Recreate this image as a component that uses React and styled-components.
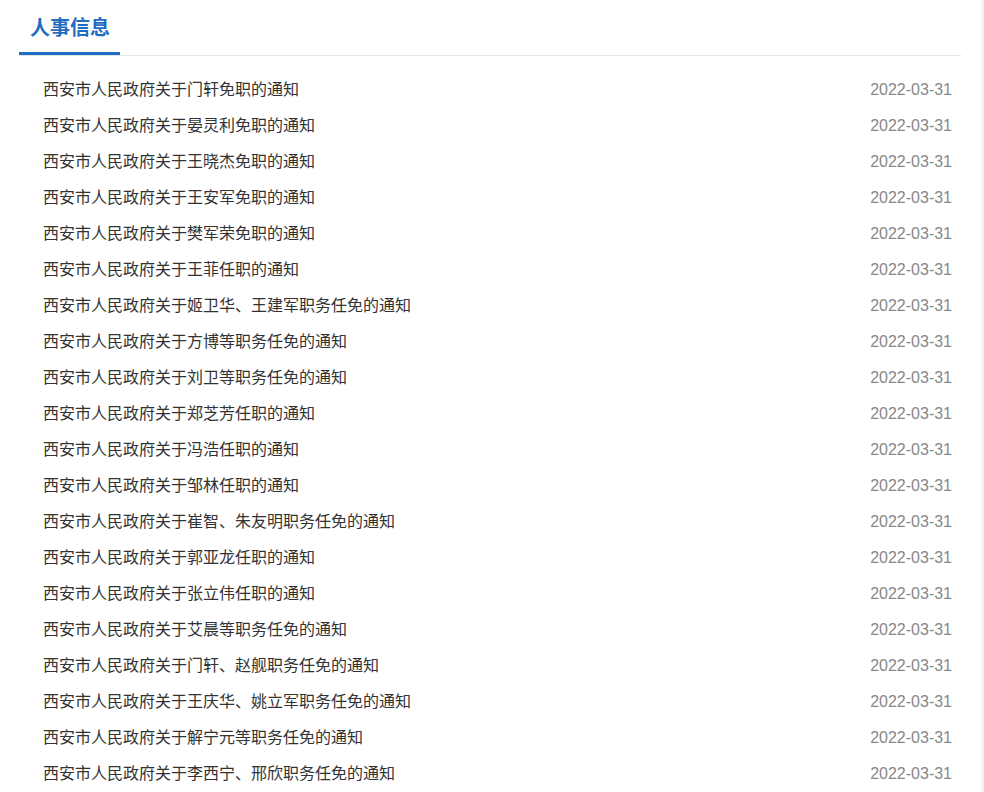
import React from 'react'
import styled, { createGlobalStyle } from 'styled-components'

const GlobalStyle = createGlobalStyle`
  html, body {
    margin: 0;
    padding: 0;
    background: #fff;
  }
  body {
    font-family: "Liberation Sans", "Noto Sans CJK SC", sans-serif;
  }
`

const Page = styled.div`
  display: flex;
  min-height: 100vh;
`

const Main = styled.div`
  flex: 1;
  padding: 0 20px 0 19px;
`

const Strip = styled.div`
  width: 3px;
  background: #edf4fc;
`

const Header = styled.div`
  display: flex;
  border-bottom: 1px solid #e3e3e3;
`

const Tab = styled.div`
  padding: 4px 10px 0 11px;
  line-height: 48px;
  height: 48px;
  font-size: 20px;
  font-weight: bold;
  color: #1f6cc2;
  border-bottom: 3px solid #1f6fc4;
`

const List = styled.ul`
  list-style: none;
  margin: 0;
  padding: 14px 9px 0 24px;
`

const Row = styled.li`
  display: flex;
  justify-content: space-between;
  align-items: center;
  height: 36px;
  font-size: 16px;
`

const Title = styled.a`
  color: #333;
  text-decoration: none;
`

const Date = styled.span`
  padding-top: 4px;
  color: #888;
`

const names = [
  '门轩免职',
  '晏灵利免职',
  '王晓杰免职',
  '王安军免职',
  '樊军荣免职',
  '王菲任职',
  '姬卫华、王建军职务任免',
  '方博等职务任免',
  '刘卫等职务任免',
  '郑芝芳任职',
  '冯浩任职',
  '邹林任职',
  '崔智、朱友明职务任免',
  '郭亚龙任职',
  '张立伟任职',
  '艾晨等职务任免',
  '门轩、赵舰职务任免',
  '王庆华、姚立军职务任免',
  '解宁元等职务任免',
  '李西宁、邢欣职务任免',
]

export default function App() {
  return (
    <Page>
      <GlobalStyle />
      <Main>
        <Header>
          <Tab>人事信息</Tab>
        </Header>
        <List>
          {names.map((n) => (
            <Row key={n}>
              <Title href="#">西安市人民政府关于{n}的通知</Title>
              <Date>2022-03-31</Date>
            </Row>
          ))}
        </List>
      </Main>
      <Strip />
    </Page>
  )
}
